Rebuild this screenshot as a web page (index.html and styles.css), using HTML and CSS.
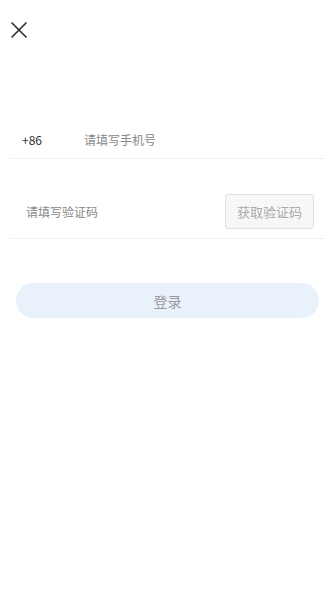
FILE: index.html
```html
<!DOCTYPE html>
<html lang="zh">
<head>
<meta charset="utf-8">
<link rel="stylesheet" href="styles.css">
</head>
<body>
<div class="page">
  <div class="top">
    <svg class="close" width="18" height="18" viewBox="0 0 18 18"><path d="M2 2 L16 16 M16 2 L2 16" stroke="#333" stroke-width="1.7" fill="none" stroke-linecap="round"/></svg>
  </div>
  <div class="form">
    <div class="row phone">
      <span class="code">+86</span>
      <span class="ph">请填写手机号</span>
    </div>
    <div class="row sms">
      <span class="ph sms-ph">请填写验证码</span>
      <span class="getcode">获取验证码</span>
    </div>
  </div>
  <div class="login">登录</div>
</div>
</body>
</html>
```
FILE: styles.css
```css
html, body { margin: 0; padding: 0; background: #fff; }
body { font-family: "Noto Sans CJK SC", "Noto Sans", sans-serif; }
.page { width: 335px; height: 600px; }
.top { height: 60px; padding-left: 10px; display: flex; align-items: center; }
.close { display: block; }
.form { margin: 61px 10px 0 10px; }
.row { display: flex; border-bottom: 1px solid #f0f0f0; }
.phone { height: 37px; padding-left: 12px; align-items: center; }
.code { width: 62px; font-size: 12px; color: #333; }
.ph { font-size: 12px; color: #888; line-height: 17px; }
.sms { margin-top: 34px; height: 45px; padding-left: 16px; justify-content: space-between; align-items: flex-start; padding-right: 11px; }
.sms-ph { margin-top: 10px; }
.getcode { width: 89px; height: 35px; box-sizing: border-box; border: 1px solid #e0e0e0; border-radius: 3px; background: #f7f7f7; color: #aaa; font-size: 13px; display: flex; align-items: center; justify-content: center; margin-top: 1px; }
.login { margin: 44px 16px 0 16px; height: 35px; border-radius: 18px; background: #e9f1fb; color: #999; font-size: 14px; display: flex; align-items: center; justify-content: center; }
```
